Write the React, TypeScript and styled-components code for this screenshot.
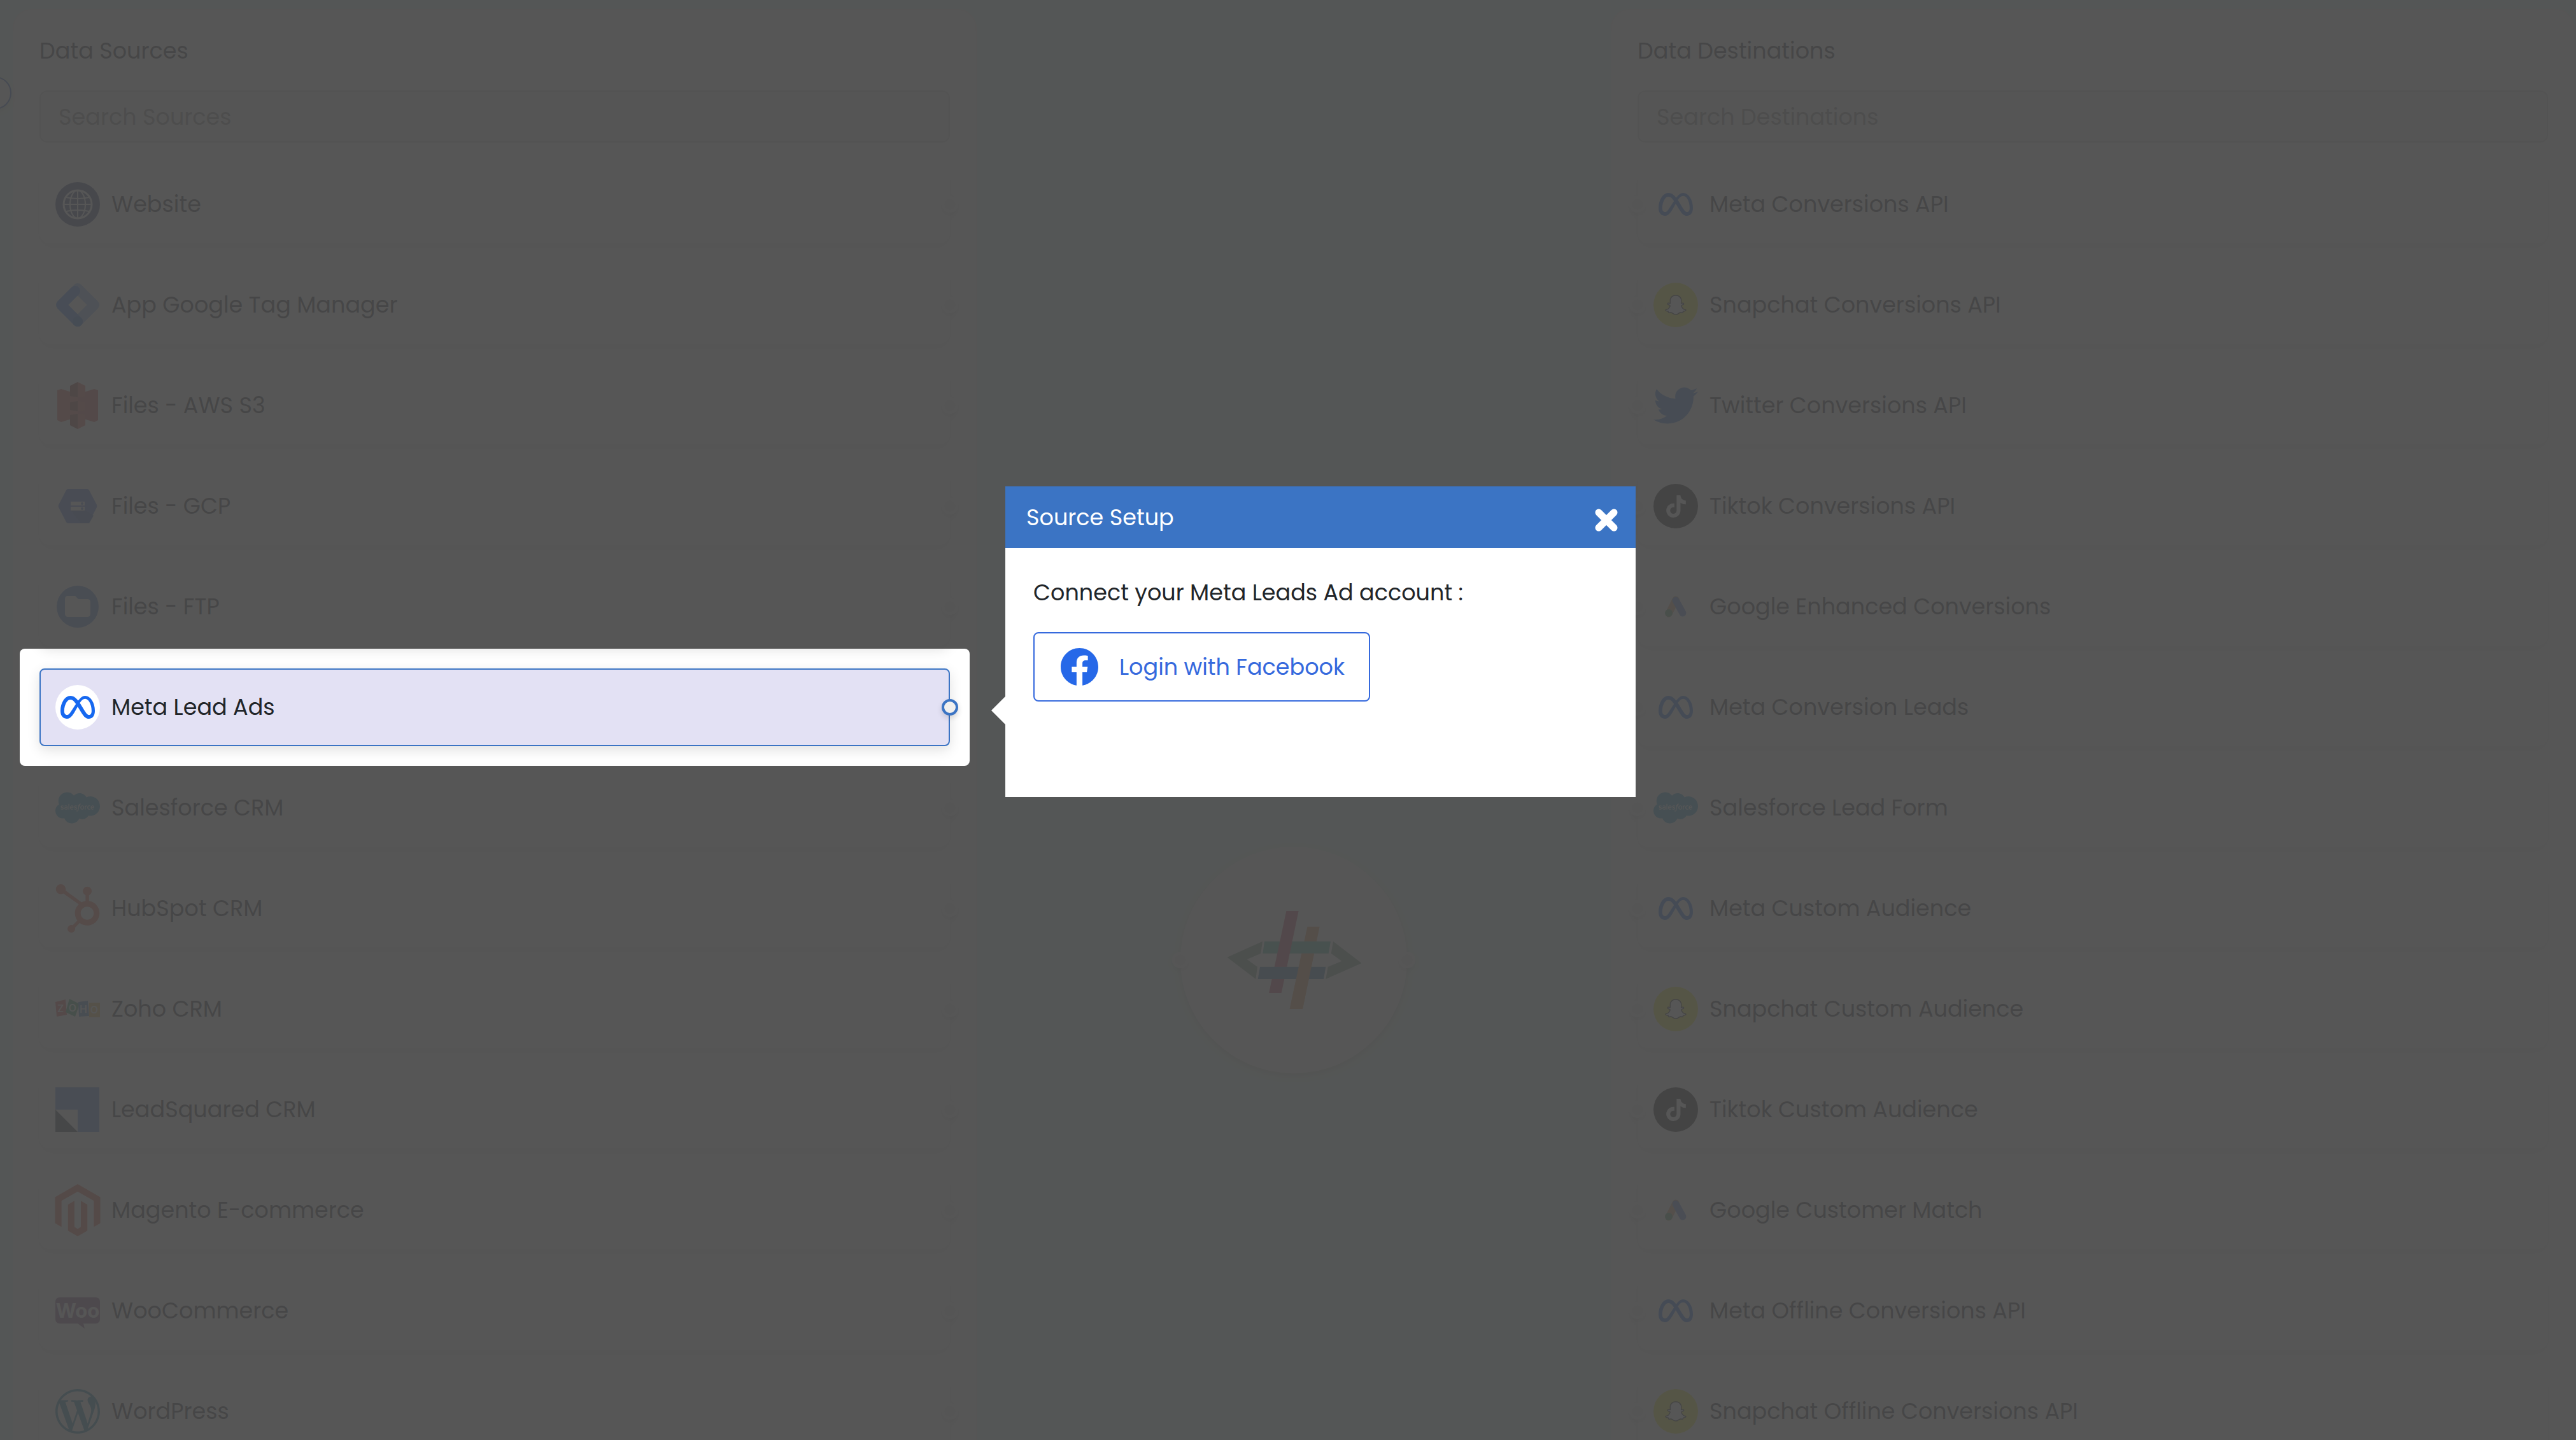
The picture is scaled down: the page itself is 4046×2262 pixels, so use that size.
import React from "react";
import styled, { createGlobalStyle, css } from "styled-components";
import { FaFacebook, FaHubspot, FaSalesforce, FaSnapchatGhost, FaTiktok, FaTwitter } from "react-icons/fa";
import { SiMagento, SiMeta, SiWordpress } from "react-icons/si";

const GlobalStyle = createGlobalStyle`
  *, *::before, *::after { box-sizing: border-box; }
  body {
    margin: 0;
    background: rgb(226, 255, 244);
    color: #212529;
    font-family: Poppins, Inter, "Noto Sans", sans-serif;
    font-size: 35px;
    line-height: 54px;
  }
  button, input { font: inherit; color: inherit; }
  ul { list-style: none; margin: 0; padding: 0; }
  h2, h3, p { margin: 0; font-size: inherit; font-weight: 400; }
`;

const Page = styled.main`
  position: relative;
  display: grid;
  grid-template-columns: 38fr 25fr 38fr;
  height: 100vh;
  padding: 14px 2px 0 20px;
  overflow: hidden;
`;

const CollapseButton = styled.button`
  position: absolute;
  top: 120px;
  left: -34px;
  width: 52px;
  height: 52px;
  padding: 0;
  border: 2px solid #2458c4;
  border-radius: 50%;
  background: #fff;
  box-shadow: 0 4px 8px rgba(120, 40, 40, 0.2);
`;

const Panel = styled.section`
  display: flex;
  flex-direction: column;
  align-self: start;
  padding: 36px 42px;
  border-radius: 30px;
  background: #fff;
  box-shadow: inset 0 0 8px rgba(120, 40, 40, 0.16);
`;

const PanelTitle = styled.h2`
  line-height: 60px;
  margin-bottom: 32px;
`;

const Search = styled.input`
  width: 100%;
  height: 82px;
  margin-bottom: 36px;
  padding: 0 28px;
  border: 2px solid #d2d2d2;
  border-radius: 12px;
  background: #f0f0f0;
  &::placeholder { color: #808080; opacity: 1; }
`;

const Rows = styled.ul`
  display: flex;
  flex-direction: column;
  gap: 36px;
`;

const RowItem = styled.li<{ $active?: boolean }>`
  position: relative;
  ${(p) => p.$active && css`z-index: 2;`}
`;

const RowButton = styled.button<{ $active?: boolean }>`
  display: flex;
  align-items: center;
  gap: 18px;
  width: 100%;
  height: 122px;
  padding: 0 23px;
  border: 2px solid ${(p) => (p.$active ? "#3b74c4" : "#fff")};
  border-radius: ${(p) => (p.$active ? 8 : 16)}px;
  background: ${(p) => (p.$active ? "#e3e1f4" : "#fff")};
  box-shadow: 0 6px 20px rgba(0, 0, 0, 0.12);
  text-align: left;
`;

const Handle = styled.span<{ $side: "left" | "right"; $active?: boolean }>`
  position: absolute;
  top: 48px;
  ${(p) => p.$side}: -13px;
  width: 26px;
  height: 26px;
  border: 4px solid ${(p) => (p.$active ? "#3b74c4" : "#fff")};
  border-radius: 50%;
  background: #f1f0ee;
  box-shadow: 0 4px 8px rgba(0, 0, 0, 0.14);
`;

const Spotlight = styled.div`
  position: absolute;
  inset: -31px;
  border-radius: 8px;
  box-shadow: 0 0 0 5000px rgba(73, 73, 73, 0.93);
  pointer-events: none;
`;

const IconBox = styled.span<{ $bg?: string; $fg?: string; $size?: number }>`
  display: flex;
  flex: none;
  align-items: center;
  justify-content: center;
  width: 70px;
  height: 70px;
  border-radius: 50%;
  background: ${(p) => p.$bg || "transparent"};
  color: ${(p) => p.$fg || "inherit"};
  svg { display: block; flex: none; width: ${(p) => p.$size || 70}px; height: ${(p) => p.$size || 70}px; overflow: visible; }
`;

const HubColumn = styled.div`
  display: flex;
  justify-content: center;
  align-items: flex-start;
  padding-top: 1316px;
`;

const Hub = styled.div`
  position: relative;
  width: 356px;
  height: 356px;
  border-radius: 50%;
  background: #fff;
  box-shadow: 0 4px 12px rgba(120, 40, 40, 0.25);
  svg { display: block; width: 100%; height: 100%; }
`;

const HubHandle = styled(Handle)`
  top: 165px;
`;

const Popover = styled.div`
  position: absolute;
  top: -286px;
  left: calc(100% + 87px);
  width: 990px;
  background: #fff;
  &::before {
    content: "";
    position: absolute;
    top: 330px;
    right: 100%;
    border: 22px solid transparent;
    border-left-width: 0;
    border-right-color: #fff;
  }
`;

const PopoverHeader = styled.header`
  display: flex;
  align-items: center;
  justify-content: space-between;
  height: 97px;
  padding: 0 27px 0 33px;
  background: #3b74c4;
  color: #fff;
`;

const CloseButton = styled.button`
  display: flex;
  margin-top: 8px;
  padding: 0;
  border: 0;
  background: none;
  svg { width: 38px; height: 38px; }
`;

const PopoverBody = styled.div`
  display: flex;
  flex-direction: column;
  align-items: flex-start;
  gap: 35px;
  min-height: 391px;
  padding: 43px 44px;
`;

const FacebookButton = styled.button`
  display: flex;
  align-items: center;
  gap: 32px;
  height: 109px;
  padding: 0 38px 0 40px;
  border: 2px solid #3569dd;
  border-radius: 8px;
  background: #fff;
  color: #3569dd;
  svg { width: 61px; height: 61px; color: #2668e8; }
`;

const Globe = () => (
  <svg viewBox="0 0 70 70" fill="none" stroke="#fff" strokeWidth="2">
    <circle cx="35" cy="35" r="22" strokeWidth="3" />
    <ellipse cx="35" cy="35" rx="12" ry="22" />
    <path d="M35 13v44M13 35h44M17 24q18 4 36 0M17 46q18-4 36 0" />
  </svg>
);

const TagManager = () => (
  <svg viewBox="0 0 70 70" fill="none" strokeLinejoin="round" strokeLinecap="round" strokeWidth="16">
    <path d="M35 9L61 35L35 61" stroke="#8ab4f8" />
    <path d="M31 13L9 35L35 61" stroke="#4285f4" />
    <circle cx="35" cy="61" r="8" fill="#246fdb" />
  </svg>
);

const AwsS3 = () => (
  <svg viewBox="0 0 70 70">
    <path d="M3 11l6-2 26 8v36L9 61l-6-3z" fill="#d8584a" />
    <path d="M67 11l-6-2-26 8v36l26 8 6-3z" fill="#cc5044" />
    <path d="M23 4l12-6v24l-12-2zM23 30l12-2v16l-12-2zM23 50l12-2v24l-12-6z" fill="#8c3123" />
    <path d="M47 4L35-2v24l12-2zM47 30l-12-2v16l12-2zM47 50l-12-2v24l12-6z" fill="#e25444" />
  </svg>
);

const Gcp = () => (
  <svg viewBox="0 0 70 70">
    <path d="M20 8h30q2 0 3 2l12 23q1 2 0 4L53 60q-1 2-3 2H20q-2 0-3-2L5 37q-1-2 0-4L17 10q1-2 3-2z" fill="#4778d8" />
    <path d="M24 41h22L60 50l-7 12H40z" fill="#3c68c4" />
    <rect x="24" y="28" width="22" height="6" fill="#fff" />
    <rect x="24" y="36" width="22" height="6" fill="#fff" />
    <circle cx="42" cy="31" r="2" fill="#4778d8" />
    <circle cx="42" cy="39" r="2" fill="#4778d8" />
  </svg>
);

const Folder = () => (
  <svg viewBox="0 0 70 70">
    <circle cx="35" cy="35" r="33" fill="#4a7bd0" />
    <path d="M20 18h11l5 5h14q5 0 5 5v18q0 5-5 5H20q-5 0-5-5V23q0-5 5-5z" fill="#fff" />
  </svg>
);

const Zoho = () => (
  <svg viewBox="0 0 70 70" fontFamily="Inter, sans-serif" fontSize="16" fontWeight="500" fill="#fff" textAnchor="middle">
    <path d="M0 24l16-4 2 24-16 3z" fill="#e04848" />
    <path d="M22 19l16 8-7 20-15-7z" fill="#30a060" />
    <path d="M36 24l15-2 2 24-16 1z" fill="#4080c0" />
    <path d="M53 25h17v23H53z" fill="#e8b850" />
    <text x="8" y="40">Z</text>
    <text x="27" y="39">O</text>
    <text x="44" y="41">H</text>
    <text x="61" y="42">O</text>
  </svg>
);

const LeadSquared = () => (
  <svg viewBox="0 0 70 70">
    <path d="M0 0h69v70H35V35H0z" fill="#4884dc" />
    <path d="M0 35l35 35H0z" fill="#1c2a38" />
  </svg>
);

const Woo = () => (
  <svg viewBox="0 0 70 70">
    <path d="M7 14h56q7 0 7 7v27q0 7-7 7H44l2 8-11-8H7q-7 0-7-7V21q0-7 7-7z" fill="#7a4a80" />
    <text x="35" y="46" fontFamily="Inter, sans-serif" fontSize="31" fontWeight="700" fill="#fff" textAnchor="middle">Woo</text>
  </svg>
);

const Snap = () => (
  <IconBox $bg="#f0ec20" $fg="#fff" $size={32}>
    <FaSnapchatGhost stroke="#111" strokeWidth="22" />
  </IconBox>
);

const TikTok = () => (
  <IconBox $bg="#0b0b0b" $fg="#fff" $size={35}>
    <FaTiktok />
  </IconBox>
);

const GoogleAds = () => (
  <IconBox>
    <svg viewBox="0 0 70 70" strokeLinecap="round" strokeWidth="11">
      <path d="M35 24L24 46" stroke="#d8a060" />
      <path d="M35 25L46 45" stroke="#5a86d8" />
      <circle cx="24" cy="45" r="6" fill="#48a068" />
    </svg>
  </IconBox>
);

const Meta = () => (
  <IconBox $bg="#fff" $fg="#1668f0" $size={54}>
    <SiMeta />
  </IconBox>
);

const Salesforce = () => (
  <IconBox $fg="#1f9bd0">
    <FaSalesforce />
  </IconBox>
);

type Entry = { name: string; icon: React.ReactNode; active?: boolean };

const sources: Entry[] = [
  { name: "Website", icon: <IconBox $bg="#2c3a72"><Globe /></IconBox> },
  { name: "App Google Tag Manager", icon: <IconBox><TagManager /></IconBox> },
  { name: "Files - AWS S3", icon: <IconBox><AwsS3 /></IconBox> },
  { name: "Files - GCP", icon: <IconBox><Gcp /></IconBox> },
  { name: "Files - FTP", icon: <IconBox><Folder /></IconBox> },
  { name: "Meta Lead Ads", icon: <Meta />, active: true },
  { name: "Salesforce CRM", icon: <Salesforce /> },
  { name: "HubSpot CRM", icon: <IconBox $fg="#e8604c" $size={76}><FaHubspot /></IconBox> },
  { name: "Zoho CRM", icon: <IconBox><Zoho /></IconBox> },
  { name: "LeadSquared CRM", icon: <IconBox><LeadSquared /></IconBox> },
  { name: "Magento E-commerce", icon: <IconBox $fg="#e05438" $size={82}><SiMagento /></IconBox> },
  { name: "WooCommerce", icon: <IconBox><Woo /></IconBox> },
  { name: "WordPress", icon: <IconBox $fg="#0e7aa8"><SiWordpress /></IconBox> },
];

const destinations: Entry[] = [
  { name: "Meta Conversions API", icon: <Meta /> },
  { name: "Snapchat Conversions API", icon: <Snap /> },
  { name: "Twitter Conversions API", icon: <IconBox $fg="#2c78e0"><FaTwitter /></IconBox> },
  { name: "Tiktok Conversions API", icon: <TikTok /> },
  { name: "Google Enhanced Conversions", icon: <GoogleAds /> },
  { name: "Meta Conversion Leads", icon: <Meta /> },
  { name: "Salesforce Lead Form", icon: <Salesforce /> },
  { name: "Meta Custom Audience", icon: <Meta /> },
  { name: "Snapchat Custom Audience", icon: <Snap /> },
  { name: "Tiktok Custom Audience", icon: <TikTok /> },
  { name: "Google Customer Match", icon: <GoogleAds /> },
  { name: "Meta Offline Conversions API", icon: <Meta /> },
  { name: "Snapchat Offline Conversions API", icon: <Snap /> },
];

const SourceSetup = () => (
  <Popover role="dialog" aria-labelledby="setup-title">
    <PopoverHeader>
      <h3 id="setup-title">Source Setup</h3>
      <CloseButton type="button" aria-label="Close">
        <svg viewBox="0 0 38 38" stroke="currentColor" strokeWidth="11" strokeLinecap="round">
          <path d="M7 7l24 24M31 7L7 31" />
        </svg>
      </CloseButton>
    </PopoverHeader>
    <PopoverBody>
      <p>Connect your Meta Leads Ad account :</p>
      <FacebookButton type="button">
        <FaFacebook />
        Login with Facebook
      </FacebookButton>
    </PopoverBody>
  </Popover>
);

const ConnectorPanel = ({ title, search, items, side }: {
  title: string;
  search: string;
  items: Entry[];
  side: "left" | "right";
}) => (
  <Panel>
    <PanelTitle>{title}</PanelTitle>
    <Search type="text" placeholder={search} aria-label={search} />
    <Rows>
      {items.map((item) => (
        <RowItem key={item.name} $active={item.active}>
          <RowButton type="button" $active={item.active}>
            {item.icon}
            {item.name}
          </RowButton>
          <Handle $side={side} $active={item.active} />
          {item.active && <Spotlight />}
          {item.active && <SourceSetup />}
        </RowItem>
      ))}
    </Rows>
  </Panel>
);

export default function App() {
  return (
    <>
      <GlobalStyle />
      <Page>
        <CollapseButton type="button" aria-label="Toggle menu" />
        <ConnectorPanel title="Data Sources" search="Search Sources" items={sources} side="right" />
        <HubColumn>
          <Hub>
            <svg viewBox="222 210 1068 1068">
              <path d="M442 731l167-75-8 57-65 28 49 35-8 58zM942 656l134 103-169 75 10-58 65-27-50-36z" fill="#789c86" />
              <path d="M820 587h58l-80 388h-61z" fill="#e09450" />
              <path d="M618 656h312l-10 57H610z" fill="#3cb09c" />
              <path d="M721 513h58l-81 387h-59z" fill="#c84060" />
              <path d="M597 776h310l-10 58H587z" fill="#3074a8" />
              <path d="M793 713h59l-54 262h-61z" fill="#e09450" />
            </svg>
            <HubHandle $side="left" />
            <HubHandle $side="right" />
          </Hub>
        </HubColumn>
        <ConnectorPanel title="Data Destinations" search="Search Destinations" items={destinations} side="left" />
      </Page>
    </>
  );
}
